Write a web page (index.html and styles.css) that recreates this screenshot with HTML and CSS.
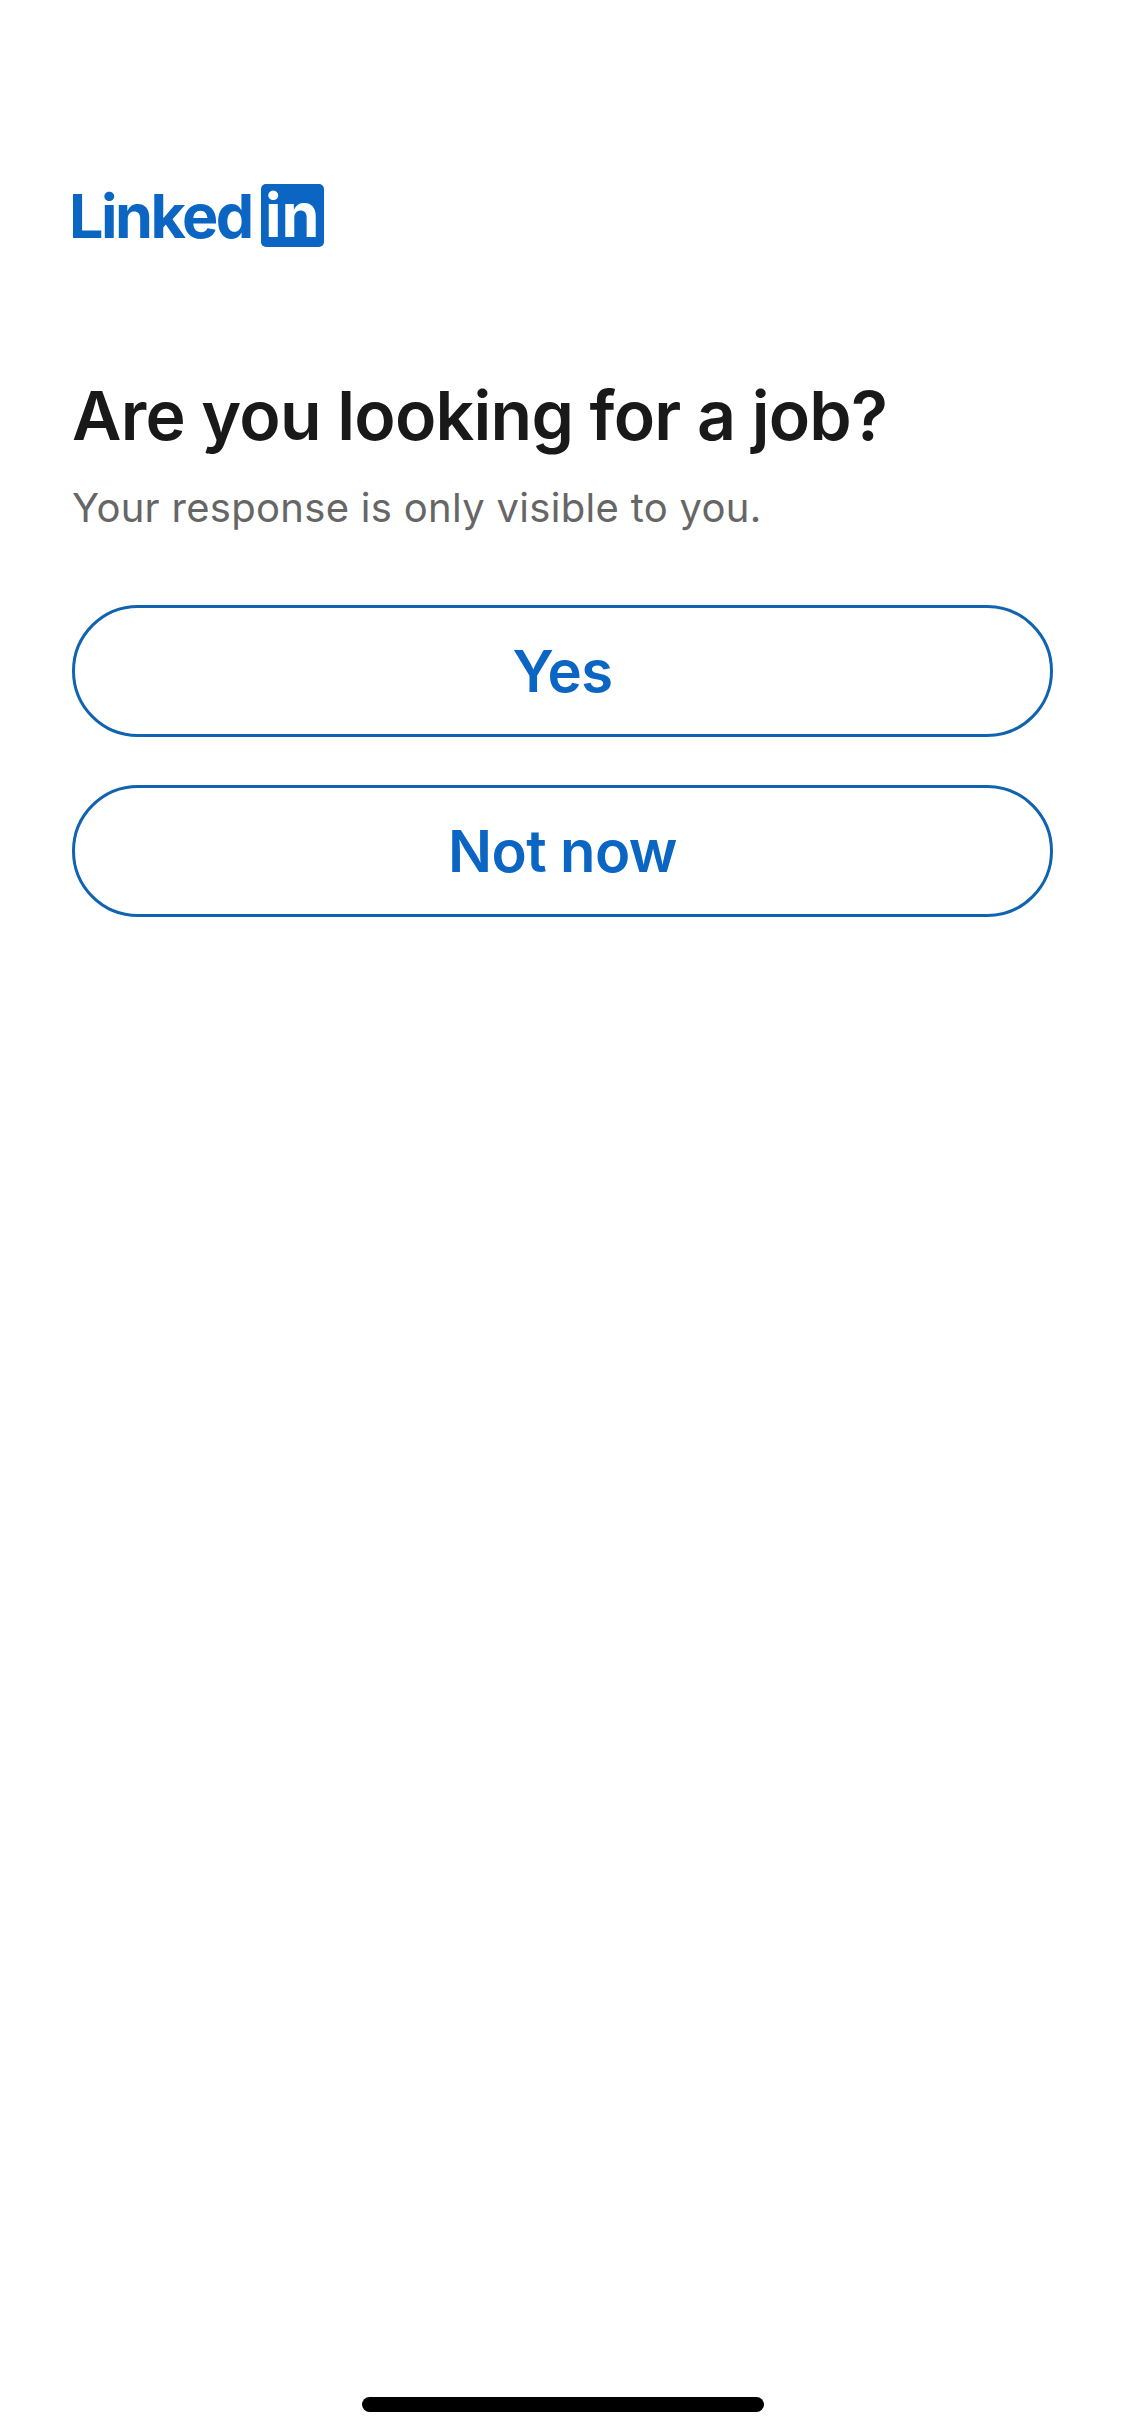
FILE: index.html
```html
<!DOCTYPE html>
<html lang="en">
<head>
  <meta charset="UTF-8">
  <title>LinkedIn</title>
  <link rel="stylesheet" href="styles.css">
</head>
<body>

  <div class="page">
    <div class="logo">
      <span class="logo-word">Linked</span>
      <span class="logo-box">in</span>
    </div>

    <h1>Are you looking for a job?</h1>
    <p class="note">Your response is only visible to you.</p>

    <div class="actions">
      <button>Yes</button>
      <button>Not now</button>
    </div>

    <div class="home-bar"></div>
  </div>

</body>
</html>
```

FILE: styles.css
```css
body {
  margin: 0;
  background-color: #fff;
  font-family: Inter, "Liberation Sans", sans-serif;
}
.page {
  display: flex;
  flex-direction: column;
  height: 2436px;
  box-sizing: border-box;
  padding: 184px 72px 24px;
}
.logo {
  display: flex;
  align-items: center;
  gap: 9px;
  height: 63px;
}
.logo-word {
  margin-left: -3px;
  color: #0a66c2;
  font-size: 61px;
  font-weight: 700;
  letter-spacing: -2.5px;
}
.logo-box {
  width: 63px;
  height: 63px;
  background: #0a66c2;
  color: #fff;
  border-radius: 5px;
  font-size: 61px;
  font-weight: 700;
  line-height: 63px;
  text-align: center;
}
h1 {
  margin: 126px 0 0;
  color: #191919;
  font-size: 68px;
  font-weight: 600;
  line-height: 84px;
  letter-spacing: -0.75px;
}
.note {
  margin: 25px 0 0;
  color: #666;
  font-size: 40px;
  line-height: 52px;
  letter-spacing: 0.3px;
}
.actions {
  display: flex;
  flex-direction: column;
  gap: 48px;
  margin-top: 71px;
}
button {
  height: 132px;
  background: #fff;
  border: 3px solid #0f63b0;
  border-radius: 66px;
  color: #0a66c2;
  font-family: inherit;
  font-size: 58px;
  font-weight: 600;
  letter-spacing: -0.6px;
}
.home-bar {
  width: 402px;
  height: 15px;
  margin: auto auto 0;
  background: #000;
  border-radius: 8px;
}
```
